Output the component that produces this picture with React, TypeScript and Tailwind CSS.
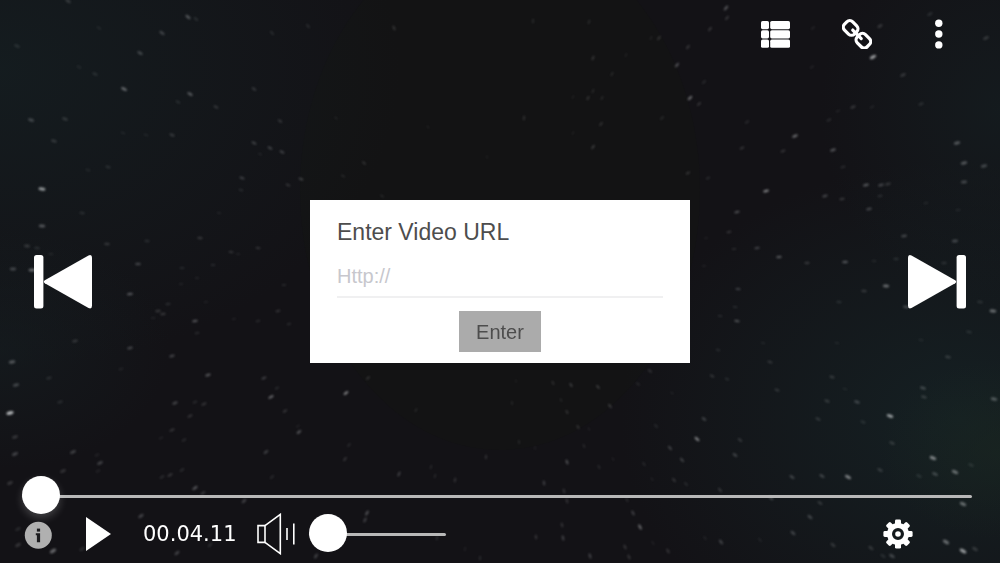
import { useState } from 'react'

// [x, y, brightness]
const STARS = [
  [68, 1, 3], [188, 17, 5], [196, 19, 2], [162, 33, 4], [140, 53, 4], [17, 46, 2],
  [99, 28, 1], [272, 33, 2], [308, 26, 2], [394, 28, 3], [124, 89, 6], [95, 74, 2],
  [79, 67, 1], [190, 94, 5], [178, 102, 2], [216, 107, 3], [254, 89, 3], [31, 120, 4],
  [65, 119, 3], [54, 141, 3], [172, 135, 3], [123, 133, 1], [146, 135, 1], [280, 121, 3],
  [254, 143, 4], [270, 148, 4], [282, 152, 4], [260, 154, 1], [336, 118, 1], [364, 163, 3],
  [343, 176, 2], [301, 179, 4], [288, 185, 3], [242, 178, 4], [241, 190, 2], [42, 189, 8],
  [88, 170, 1], [108, 167, 2], [82, 213, 2], [42, 226, 5], [107, 244, 3], [27, 246, 3],
  [37, 248, 2], [51, 254, 1], [147, 241, 2], [200, 238, 3], [231, 252, 3], [238, 254, 1],
  [258, 248, 3], [219, 213, 1], [138, 264, 4], [13, 269, 4], [32, 270, 6], [182, 268, 2],
  [213, 265, 2], [197, 278, 1], [382, 196, 2], [428, 127, 1], [487, 157, 1],
  [533, 21, 2], [589, 22, 2], [726, 8, 5], [727, 18, 3], [710, 29, 3], [659, 38, 3],
  [651, 38, 1], [688, 47, 3], [593, 58, 3], [677, 65, 5], [612, 74, 2], [626, 55, 1],
  [593, 91, 2], [588, 98, 3], [602, 98, 2], [573, 97, 1], [690, 98, 6], [699, 104, 3],
  [704, 82, 2], [524, 118, 3], [601, 124, 3], [573, 133, 1], [662, 118, 2], [593, 147, 4],
  [747, 122, 2], [795, 136, 6], [783, 151, 3], [742, 148, 3], [833, 150, 5], [829, 120, 2],
  [838, 111, 1], [853, 107, 3], [872, 107, 1], [921, 104, 2], [903, 75, 3], [873, 57, 8],
  [880, 26, 3], [930, 14, 2], [986, 38, 3], [813, 28, 1], [812, 67, 1], [957, 143, 5],
  [964, 163, 5], [984, 166, 4], [964, 182, 4], [843, 167, 2], [688, 173, 3], [708, 178, 2],
  [766, 191, 7], [866, 185, 5], [881, 185, 4], [888, 184, 3], [880, 196, 2], [825, 196, 4],
  [842, 199, 3], [869, 209, 4], [926, 203, 1], [958, 210, 1], [737, 212, 5], [729, 232, 3],
  [706, 238, 1], [734, 249, 2], [757, 248, 4], [779, 257, 5], [807, 263, 3], [845, 262, 5],
  [904, 236, 4], [955, 241, 4], [874, 261, 1], [896, 259, 2], [944, 263, 2], [704, 266, 1],
  [738, 289, 4], [735, 307, 2], [737, 321, 5], [720, 316, 2], [864, 291, 3], [886, 286, 6],
  [839, 302, 2], [906, 307, 4], [980, 302, 2], [993, 311, 6], [969, 332, 2], [921, 340, 1],
  [837, 343, 1], [763, 343, 1], [718, 350, 2], [770, 362, 3], [948, 357, 3], [712, 376, 3],
  [727, 379, 2], [832, 377, 3], [845, 389, 1], [777, 390, 3], [923, 388, 4], [924, 397, 3],
  [994, 399, 5], [827, 401, 3], [857, 402, 4], [890, 416, 8], [818, 419, 3], [863, 422, 2],
  [650, 371, 3], [638, 384, 2], [553, 383, 3], [571, 385, 4], [598, 387, 4], [610, 406, 4],
  [516, 381, 1], [512, 403, 2], [561, 400, 2], [567, 412, 3], [672, 393, 1], [704, 419, 4],
  [697, 439, 7], [740, 440, 3], [735, 455, 4], [656, 426, 2], [670, 448, 4], [682, 460, 4],
  [578, 427, 3], [589, 429, 1], [584, 446, 2], [519, 442, 2], [535, 448, 1], [567, 462, 5],
  [599, 467, 2], [613, 459, 1], [644, 464, 2], [674, 480, 3], [686, 484, 2], [652, 479, 1],
  [544, 483, 4], [564, 491, 3], [567, 501, 3], [720, 490, 3], [771, 498, 4], [792, 477, 4],
  [822, 476, 4], [848, 477, 7], [880, 470, 3], [892, 443, 3], [933, 458, 7], [955, 472, 6],
  [935, 474, 4], [919, 476, 2], [971, 465, 2], [963, 504, 6], [820, 503, 3], [810, 517, 4],
  [793, 533, 4], [833, 545, 3], [946, 542, 6], [963, 551, 8], [975, 549, 3], [892, 556, 4],
  [871, 548, 3], [883, 556, 2], [760, 540, 1], [721, 542, 4], [705, 538, 1], [627, 500, 2],
  [633, 513, 4], [640, 527, 6], [562, 525, 3], [563, 538, 4], [536, 537, 3], [590, 556, 4],
  [625, 547, 3], [629, 557, 3], [653, 543, 1], [668, 551, 3],
  [130, 294, 5], [181, 284, 1], [284, 285, 2], [168, 304, 2], [158, 311, 3], [163, 314, 3],
  [153, 318, 1], [195, 321, 5], [206, 302, 1], [197, 333, 2], [278, 311, 3], [234, 319, 1],
  [258, 321, 2], [289, 324, 2], [75, 341, 3], [130, 348, 4], [172, 356, 4], [12, 362, 5],
  [49, 378, 2], [16, 385, 4], [10, 413, 9], [60, 402, 2], [121, 369, 1], [208, 375, 5],
  [264, 378, 4], [277, 388, 2], [271, 397, 6], [175, 403, 4], [195, 402, 2], [204, 404, 3],
  [190, 416, 3], [285, 411, 3], [346, 393, 7], [368, 378, 3], [416, 410, 2], [299, 432, 5],
  [298, 426, 1], [172, 430, 3], [184, 440, 2], [161, 438, 1], [15, 437, 3], [15, 454, 4],
  [73, 452, 4], [100, 463, 4], [97, 455, 1], [63, 471, 3], [98, 471, 1], [266, 452, 4],
  [349, 445, 2], [345, 459, 3], [182, 470, 2], [170, 475, 3], [162, 477, 2], [272, 477, 2],
  [195, 488, 5], [203, 493, 3], [10, 483, 3], [399, 474, 4], [431, 467, 2], [435, 476, 2],
  [455, 480, 3], [486, 457, 3], [244, 501, 4], [367, 513, 5], [365, 520, 4], [141, 516, 4],
  [53, 551, 6], [18, 545, 3], [18, 529, 2], [82, 549, 2], [177, 553, 4], [210, 545, 2],
  [316, 556, 4], [437, 538, 2], [465, 549, 1], [480, 558, 2],
]

function Starfield() {
  return (
    <svg
      className="absolute inset-0 w-full h-full"
      viewBox="0 0 1000 563"
      preserveAspectRatio="xMidYMid slice"
      aria-hidden="true"
    >
      <defs>
        <radialGradient id="teal">
          <stop offset="0" stopColor="#152023" />
          <stop offset="1" stopColor="#152023" stopOpacity="0" />
        </radialGradient>
        <radialGradient id="green">
          <stop offset="0" stopColor="#1a2620" />
          <stop offset="1" stopColor="#1a2620" stopOpacity="0" />
        </radialGradient>
        <filter id="soft" x="-5%" y="-5%" width="110%" height="110%">
          <feGaussianBlur stdDeviation="0.8" />
        </filter>
      </defs>
      <rect width="1000" height="563" fill="#131216" />
      <ellipse cx="500" cy="190" rx="200" ry="260" fill="#131314" />
      <ellipse cx="0" cy="70" rx="400" ry="300" fill="url(#teal)" opacity="0.7" />
      <ellipse cx="0" cy="350" rx="170" ry="120" fill="url(#teal)" opacity="0.5" />
      <ellipse cx="960" cy="420" rx="340" ry="260" fill="url(#teal)" />
      <ellipse cx="1000" cy="110" rx="180" ry="200" fill="url(#teal)" opacity="0.6" />
      <ellipse cx="1000" cy="450" rx="120" ry="90" fill="url(#green)" opacity="0.6" />
      <g fill="#dfe2e4" filter="url(#soft)">
        {STARS.map(([x, y, b], i) => {
          const angle = (Math.atan2(y - 270, x - 500) * 180) / Math.PI
          const far = Math.hypot(x - 500, y - 270) / 500

          return (
            <ellipse
              key={i}
              cx={x}
              cy={y}
              rx={1.8 + far + b * 0.1}
              ry={0.5 + far * 0.8 + b * 0.05}
              opacity={0.04 + b * b * 0.006 + b * 0.025}
              transform={`rotate(${angle} ${x} ${y})`}
            />
          )
        })}
      </g>
    </svg>
  )
}

function ListIcon() {
  return (
    <svg width="30" height="30" viewBox="0 0 30 30" fill="currentColor">
      {[2, 11.2, 20.6].map((y) => (
        <g key={y}>
          <rect x="1" y={y} width="8" height="8.2" rx="1.6" />
          <rect x="10.2" y={y} width="19.8" height="8.2" rx="1.6" />
        </g>
      ))}
    </svg>
  )
}

function LinkIcon() {
  return (
    <svg width="30" height="30" viewBox="0 0 30 30">
      <g
        transform="translate(15 15.3) rotate(45)"
        fill="none"
        stroke="currentColor"
        strokeWidth="3.2"
        strokeLinecap="round"
      >
        <rect x="-16" y="-5.8" width="14" height="11.6" rx="4.2" />
        <rect x="2" y="-5.8" width="14" height="11.6" rx="4.2" />
        <path d="M-6 0H6" />
      </g>
    </svg>
  )
}

function DotsIcon() {
  return (
    <svg width="30" height="30" viewBox="0 0 30 30" fill="currentColor">
      <circle cx="14.8" cy="4.3" r="3.7" />
      <circle cx="14.8" cy="15" r="3.7" />
      <circle cx="14.8" cy="25.9" r="3.7" />
    </svg>
  )
}

function PreviousIcon() {
  return (
    <svg width="58" height="54" viewBox="0 0 58 54" fill="currentColor">
      <rect x="0" y="0" width="9.4" height="53.4" rx="2.5" />
      <path d="M10.8 25.2 54.5.4Q58-1 58 2.6V50.8Q58 54.4 54.5 53L10.8 28.2Q8.8 26.7 10.8 25.2Z" />
    </svg>
  )
}

function NextIcon() {
  return (
    <svg width="58" height="54" viewBox="0 0 58 54" fill="currentColor">
      <rect x="48.6" y="0" width="9.4" height="53.4" rx="2.5" />
      <path d="M47.2 25.2 3.5.4Q0-1 0 2.6V50.8Q0 54.4 3.5 53L47.2 28.2Q49.2 26.7 47.2 25.2Z" />
    </svg>
  )
}

function InfoIcon() {
  return (
    <svg width="28" height="30" viewBox="0 0 28 30">
      <circle cx="14.3" cy="16.3" r="13.5" fill="#b0b0b0" />
      <g fill="#1c1c1f">
        <rect x="12.9" y="9.6" width="3.2" height="3" />
        <path d="M11.8 14.2h4.3v9h-3.2v-7h-1.1z" />
      </g>
    </svg>
  )
}

function SpeakerIcon() {
  return (
    <svg
      width="38"
      height="42"
      viewBox="0 0 38 42"
      fill="none"
      stroke="currentColor"
      strokeWidth="1.6"
    >
      <path d="M1 12.6H8V29.4H1Z" />
      <path d="M8 12.6 23.3 1.4V40.6L8 29.4" />
      <path d="M30 15V27M36.8 10.4V31.6" />
    </svg>
  )
}

function GearIcon() {
  return (
    <svg width="30" height="30" viewBox="-15 -15 30 30">
      <g fill="currentColor">
        {[0, 45, 90, 135].map((angle) => (
          <rect
            key={angle}
            x="-3"
            y="-14.6"
            width="6"
            height="29.2"
            rx="1.4"
            transform={`rotate(${angle})`}
          />
        ))}
        <circle r="11" />
      </g>
      <circle r="4.4" fill="none" stroke="#141a1d" strokeWidth="3.2" />
    </svg>
  )
}

const slider =
  'block h-[38px] appearance-none bg-transparent cursor-pointer [&::-webkit-slider-runnable-track]:h-[3px] [&::-webkit-slider-runnable-track]:rounded-full [&::-webkit-slider-runnable-track]:bg-[#b8b8b8] [&::-webkit-slider-thumb]:appearance-none [&::-webkit-slider-thumb]:-mt-[19px] [&::-webkit-slider-thumb]:h-[38px] [&::-webkit-slider-thumb]:w-[38px] [&::-webkit-slider-thumb]:rounded-full [&::-webkit-slider-thumb]:bg-white'

export default function App() {
  const [url, setUrl] = useState('')

  return (
    <main className="relative min-h-screen flex flex-col overflow-hidden bg-[#131216] text-white font-['Liberation_Sans',Arial,sans-serif]">
      <Starfield />

      <header className="relative flex justify-end gap-13 pt-[19px] pr-[46px] pb-[37px]">
        <button type="button" aria-label="Playlist">
          <ListIcon />
        </button>
        <button type="button" aria-label="Open link">
          <LinkIcon />
        </button>
        <button type="button" aria-label="More options">
          <DotsIcon />
        </button>
      </header>

      <div className="relative flex-1 flex items-center justify-between px-[34px]">
        <button type="button" aria-label="Previous video">
          <PreviousIcon />
        </button>

        <form
          className="w-[380px] bg-white px-[27px] pt-[18px] pb-[11px] text-[20px] text-[#4d4d4d]"
          onSubmit={(e) => e.preventDefault()}
        >
          <label htmlFor="video-url" className="block text-[23px] leading-[28px]">
            Enter Video URL
          </label>
          <input
            id="video-url"
            type="text"
            value={url}
            onChange={(e) => setUrl(e.target.value)}
            placeholder="Http://"
            className="block w-full h-[42px] mt-[10px] border-b-2 border-[#f0f0f1] outline-none placeholder:text-[#c7c7cd]"
          />
          <button
            type="submit"
            className="block mx-auto mt-[13px] w-[82px] h-[41px] bg-[#ababab]"
          >
            Enter
          </button>
        </form>

        <button type="button" aria-label="Next video">
          <NextIcon />
        </button>
      </div>

      <footer className="relative pb-[10px]">
        <div className="pl-[22px] pr-[28px]">
          <input
            type="range"
            aria-label="Seek"
            defaultValue={0}
            className={`${slider} w-full [&::-webkit-slider-thumb]:shadow-[0_4px_8px_rgba(255,255,255,0.2)]`}
          />
        </div>

        <div className="flex items-center h-[38px] pl-6 pr-[87px]">
          <button type="button" aria-label="Info">
            <InfoIcon />
          </button>
          <button type="button" aria-label="Play" className="ml-[34px]">
            <svg width="25" height="34" viewBox="0 0 25 34" fill="currentColor">
              <path d="M0 0 25 17 0 34Z" />
            </svg>
          </button>
          <time className="ml-8 w-[96px] text-[21px] leading-[34px] whitespace-nowrap font-['DejaVu_Sans',sans-serif]">
            00.04.11
          </time>
          <button type="button" aria-label="Mute" className="ml-[18px]">
            <SpeakerIcon />
          </button>
          <input
            type="range"
            aria-label="Volume"
            defaultValue={0}
            className={`${slider} ml-[14px] w-[137px]`}
          />
          <button type="button" aria-label="Settings" className="ml-auto">
            <GearIcon />
          </button>
        </div>
      </footer>
    </main>
  )
}
